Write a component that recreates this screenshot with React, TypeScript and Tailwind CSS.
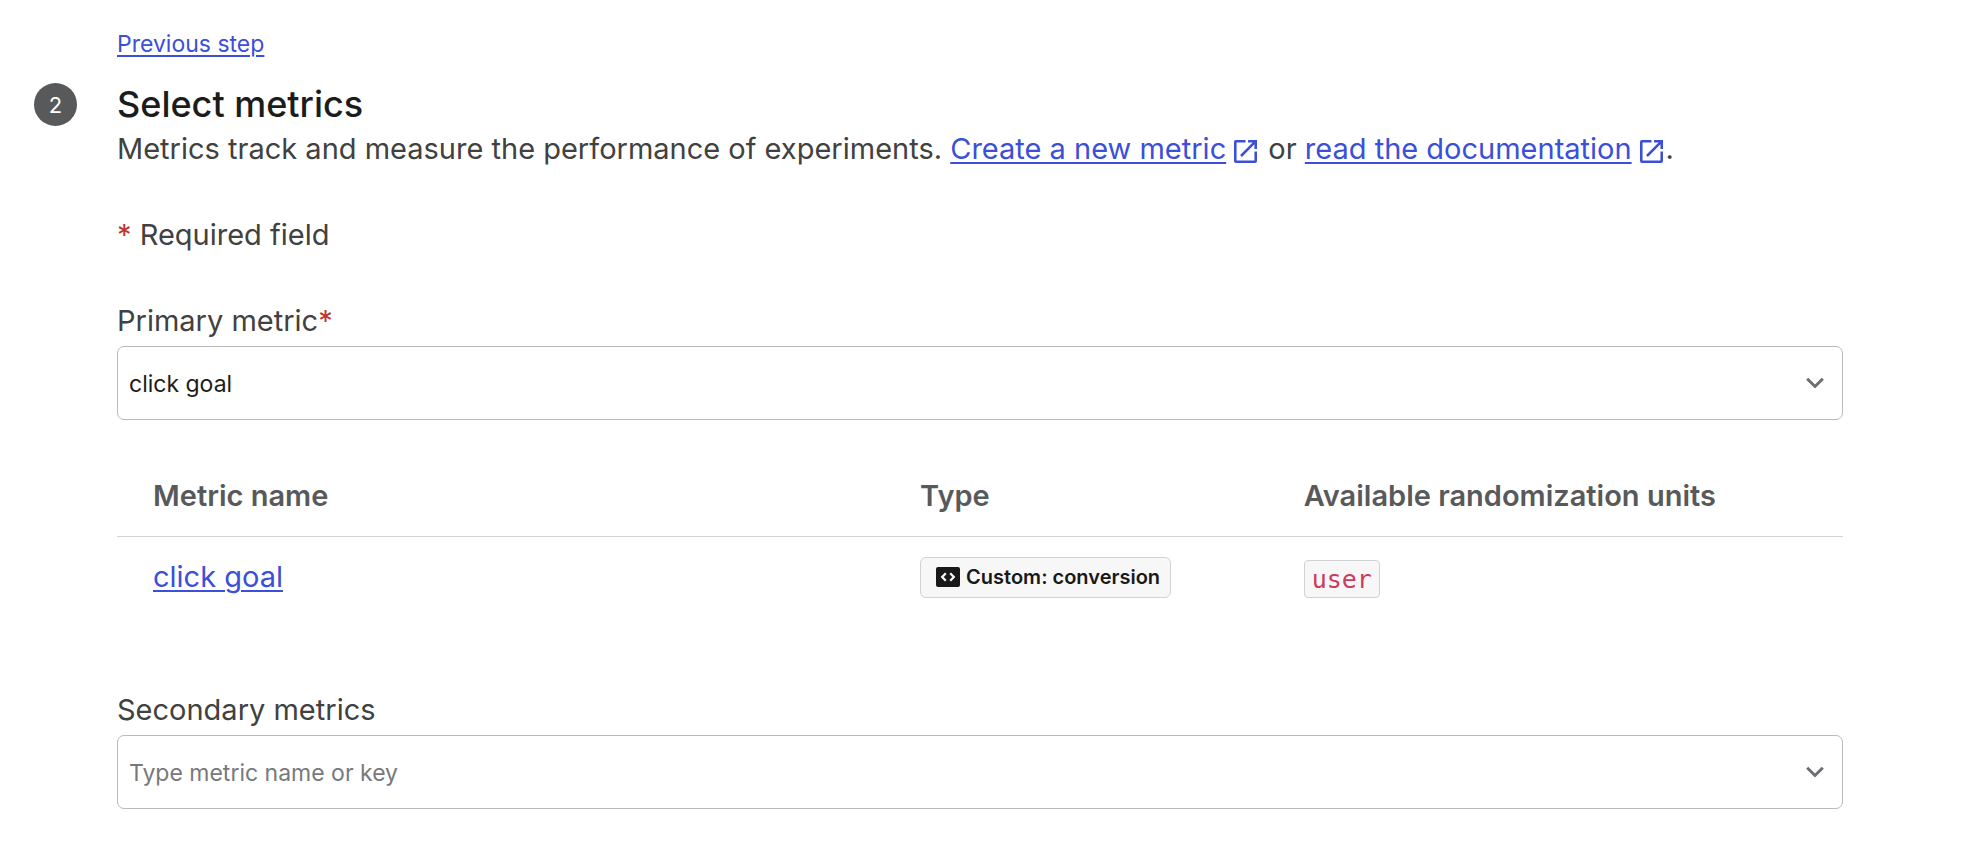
import { useId, useState } from "react";
import type { ReactNode } from "react";

function OpenInNewIcon() {
  return (
    <svg aria-hidden="true" viewBox="3 3 18 18" className="mr-[3px] ml-2 inline-block size-[23px] align-[-4px]" fill="currentColor">
      <path d="M19 19H5V5h7V3H4.500a1.500 1.500 0 0 0-1.500 1.500v15a1.500 1.500 0 0 0 1.500 1.500h15a1.500 1.500 0 0 0 1.500-1.500V12h-2v7zM14 3v2h3.590L7.760 14.830l1.410 1.410L19 6.410V10h2V3h-7z" />
    </svg>
  );
}

function Chevron() {
  return (
    <svg
      aria-hidden="true"
      viewBox="0 0 18 11"
      className="pointer-events-none absolute top-1/2 right-[19px] h-[11px] w-[18px] -translate-y-1/2"
      fill="none"
      stroke="#6c6e72"
      strokeWidth="3"
    >
      <path d="M1.200 1.200 9 9l7.800-7.800" />
    </svg>
  );
}

function CodeIcon() {
  return (
    <svg aria-hidden="true" viewBox="0 0 24 20" className="h-5 w-6 shrink-0">
      <rect width="24" height="20" rx="2" fill="#191919" />
      <path d="M9.800 6.300 6.200 10l3.600 3.700M14.200 6.300l3.600 3.700-3.600 3.700" fill="none" stroke="#f7f7f7" strokeWidth="2.300" />
    </svg>
  );
}

function Link({ children, external = false }: { children: ReactNode; external?: boolean }) {
  return (
    <a href="#" className="text-[#3b4fd8]">
      <span className="underline decoration-2 underline-offset-3">{children}</span>
      {external && <OpenInNewIcon />}
    </a>
  );
}

const fieldClass =
  "block h-[74px] w-full appearance-none rounded-[7px] border border-[#b9babc] bg-white pt-[2px] pr-14 pl-[11px] text-[23px] text-[#1c1c1c] placeholder:text-[#77797d] placeholder:opacity-100";

export default function App() {
  const primaryId = useId();
  const secondaryId = useId();
  const [primary, setPrimary] = useState("click goal");
  const [secondary, setSecondary] = useState("");

  return (
    <main className="min-h-screen bg-white pt-6 pr-[123px] pb-8 pl-[34px] font-['Inter',sans-serif] text-[29px] leading-10 text-[#414141]">
      <div className="pl-[83px] text-[23px] leading-10">
        <Link>Previous step</Link>
      </div>

      <section className="mt-4 flex">
        <div className="mt-[3px] mr-10 flex size-[43px] shrink-0 items-center justify-center rounded-full bg-[#58595b] text-[22px] text-white">
          2
        </div>

        <div className="min-w-0 flex-1">
          <h1 className="text-4xl leading-12 font-medium text-[#1c1c1c]">Select metrics</h1>
          <p className="mt-px">
            Metrics track and measure the performance of experiments. <Link external>Create a new metric</Link> or{" "}
            <Link external>read the documentation</Link>.
          </p>

          <p className="mt-[46px]">
            <span className="text-[#c0362f]">*</span> Required field
          </p>

          <label htmlFor={primaryId} className="mt-[46px] block">
            Primary metric<span className="text-[#c0362f]">*</span>
          </label>
          <div className="relative mt-[5px]">
            <select
              id={primaryId}
              required
              value={primary}
              onChange={(e) => setPrimary(e.target.value)}
              className={fieldClass}
            >
              <option>click goal</option>
            </select>
            <Chevron />
          </div>

          <table className="mt-9 w-full table-fixed text-left">
            <thead>
              <tr className="border-b border-[#d1d2d4] text-[#58595b]">
                <th className="w-4/9 py-5 pl-9 font-semibold">Metric name</th>
                <th className="w-2/9 py-5 pl-9 font-semibold">Type</th>
                <th className="w-3/9 py-5 pl-9 font-semibold">Available randomization units</th>
              </tr>
            </thead>
            <tbody>
              <tr>
                <td className="py-5 pl-9 align-top">
                  <Link>click goal</Link>
                </td>
                <td className="py-5 pl-9 align-bottom">
                  <span className="flex h-[41px] w-fit items-center gap-[6px] rounded-md border border-[#d1d2d4] bg-[#f7f7f7] pr-2.5 pb-[2px] pl-[15px] text-xl font-semibold whitespace-nowrap text-[#191919]">
                    <CodeIcon />
                    Custom: conversion
                  </span>
                </td>
                <td className="py-5 pl-9 align-bottom">
                  <code className="flex h-[38px] w-fit items-center rounded-sm border border-[#d1d2d4] bg-[#f7f7f7] px-[7px] pt-[2px] font-['DejaVu_Sans_Mono',monospace] text-[25px] text-[#cc3a5c]">
                    user
                  </code>
                </td>
              </tr>
            </tbody>
          </table>

          <label htmlFor={secondaryId} className="mt-[72px] block">
            Secondary metrics
          </label>
          <div className="relative mt-[5px]">
            <input
              id={secondaryId}
              type="text"
              role="combobox"
              aria-expanded="false"
              placeholder="Type metric name or key"
              value={secondary}
              onChange={(e) => setSecondary(e.target.value)}
              className={fieldClass}
            />
            <Chevron />
          </div>
        </div>
      </section>
    </main>
  );
}
